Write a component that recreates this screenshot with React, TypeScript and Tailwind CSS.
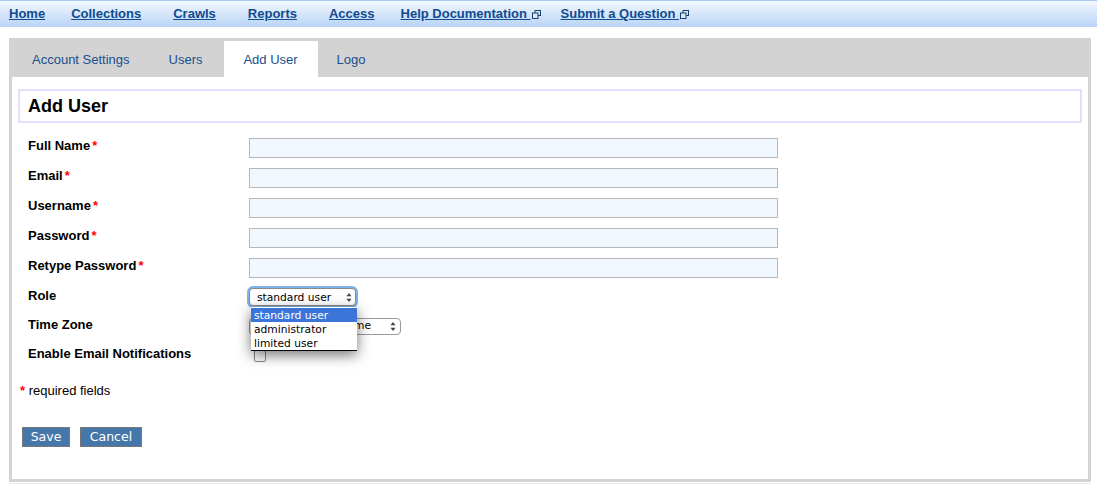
import React from "react";

const navItems = [
  { label: "Home", className: "ml-[9px]" },
  { label: "Collections", className: "ml-[26px]" },
  { label: "Crawls", className: "ml-[32px]" },
  { label: "Reports", className: "ml-[32px]" },
  { label: "Access", className: "ml-[32px]" },
  { label: "Help Documentation ", className: "ml-[26px]", external: true },
  { label: "Submit a Question ", className: "ml-[20px]", external: true },
];

const textFields = ["Full Name", "Email", "Username", "Password", "Retype Password"];

const ExternalIcon = () => (
  <svg width="9" height="9" viewBox="0 0 9 9" className="ml-[1px]" fill="none" stroke="#17406b" strokeWidth="1">
    <rect x="3" y="0.5" width="5.5" height="5" />
    <rect x="0.5" y="3" width="5.5" height="5.5" fill="#dbe8fa" />
  </svg>
);

const SelectArrows = () => (
  <svg width="6" height="9" viewBox="0 0 6 9" fill="#444">
    <path d="M3 0 L5.5 3.3 H0.5 Z" />
    <path d="M3 9 L5.5 5.7 H0.5 Z" />
  </svg>
);

const Star = () => <span className="text-[#f00] ml-[2px]">*</span>;

const App = () => {
  return (
    <div className="h-[495px] bg-white font-['Liberation_Sans',Arial,sans-serif] text-black overflow-hidden">
      {/* Top nav */}
      <div className="h-[27px] flex items-center border-t border-[#a9c9f3] bg-gradient-to-b from-[#f3f8fe] to-[#b9d3f5] text-[13px] font-bold text-[#0f4c8f]">
        {navItems.map((item) => (
          <div key={item.label} className={`flex items-center ${item.className}`}>
            <a href="#" className="underline whitespace-pre">
              {item.label}
            </a>
            {item.external && <ExternalIcon />}
          </div>
        ))}
      </div>

      {/* Panel */}
      <div className="mt-[11px] ml-[9px] w-[1082px] h-[444px] border-[3px] border-t-0 border-[#d3d3d3] shadow-[0_1px_0_#ffffff,0_2px_0_#e8e8e8]">
        <div className="h-[39px] bg-[#d3d3d3] flex items-end text-[13px] text-[#184f8e]">
          <div className="h-[36px] px-[20px] pt-[1px] flex items-center">Account Settings</div>
          <div className="h-[36px] px-[19px] pt-[1px] flex items-center">Users</div>
          <div className="h-[36px] w-[94px] ml-[2px] pt-[1px] justify-center bg-white flex items-center">Add User</div>
          <div className="h-[36px] px-[19px] pt-[1px] flex items-center">Logo</div>
        </div>

        <div className="mt-[12px] mx-[6px] h-[34px] border-2 border-[#e3dffa] pl-[8px] flex items-center text-[18px] font-bold">
          Add User
        </div>

        <div className="mt-[15px] pl-[16px] text-[13px] font-bold">
          {textFields.map((name) => (
            <div key={name} className="flex h-[30px]">
              <div className="w-[221px] leading-[15px]">
                {name}
                <Star />
              </div>
              <input className="w-[529px] h-[20px] bg-[#f0f7ff] border border-[#b8b8b8]" />
            </div>
          ))}

          <div className="flex h-[30px] relative">
            <div className="w-[221px] leading-[15px]">Role</div>
            <div className="w-[107px] h-[18px] rounded-[4px] bg-white border border-[#8a8a8a] shadow-[0_0_0_2px_#7db2ea] flex items-center justify-between pl-[7px] pr-[3px] font-['DejaVu_Sans',sans-serif] text-[10.7px] font-normal">
              <span className="pt-[2px]">standard user</span>
              <SelectArrows />
            </div>
            {/* open dropdown */}
            <div className="absolute z-10 left-[223px] top-[19px] w-[106px] h-[44px] bg-white border-b border-black pt-[1px] shadow-[0_4px_14px_rgba(0,0,0,0.55)] font-['DejaVu_Sans',sans-serif] text-[10.7px] font-normal leading-[14px]">
              <div className="bg-[#3b75d9] text-white pl-[3px] pt-[1px] h-[14px]">standard user</div>
              <div className="pl-[3px] pt-[1px] h-[14px]">administrator</div>
              <div className="pl-[3px] pt-[1px] h-[14px]">limited user</div>
            </div>
          </div>

          <div className="flex h-[29px]">
            <div className="w-[221px] leading-[15px] -mt-[1px]">Time Zone</div>
            <div className="w-[152px] h-[17px] rounded-[4px] bg-white border border-[#9a9a9a] flex items-center justify-between pl-[8px] pr-[4px] font-['DejaVu_Sans',sans-serif] text-[10.7px] font-normal">
              <span className="pl-[93px]">ime</span>
              <SelectArrows />
            </div>
          </div>

          <div className="flex h-[29px]">
            <div className="w-[226px] leading-[15px] -mt-[1px]">Enable Email Notifications</div>
            <div className="w-[12px] h-[12px] mt-[3px] rounded-[2px] border border-[#8a8a8a] bg-white" />
          </div>
        </div>

        <div className="mt-[7px] ml-[8px] text-[13px] leading-[15px]">
          <span className="text-[#f00] font-bold">*</span> required fields
        </div>

        <div className="mt-[29px] ml-[10px] flex gap-[10px] font-['DejaVu_Sans',sans-serif] text-[12.5px] font-medium text-white">
          <button className="h-[20px] w-[48px] bg-[#4577ab] border border-[#777]">Save</button>
          <button className="h-[20px] w-[62px] bg-[#4577ab] border border-[#777]">Cancel</button>
        </div>
      </div>
    </div>
  );
};

export default App;
